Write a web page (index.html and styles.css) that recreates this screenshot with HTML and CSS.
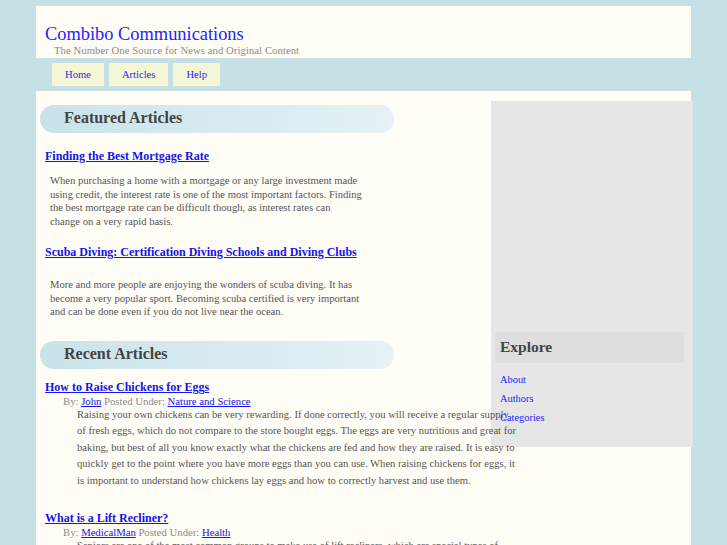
FILE: index.html
```html
<!DOCTYPE html>
<html>
<head>
<meta charset="utf-8">
<title>Combibo Communications</title>
<link rel="stylesheet" href="styles.css">
</head>
<body>
<div class="page">
  <div class="header">
    <h1 class="site-title">Combibo Communications</h1>
    <div class="tagline">The Number One Source for News and Original Content</div>
  </div>
  <div class="nav">
    <a class="nav-btn" href="#">Home</a>
    <a class="nav-btn" href="#">Articles</a>
    <a class="nav-btn" href="#">Help</a>
  </div>
  <div class="content">
    <div class="sidebar">
      <div class="explore">Explore</div>
      <ul class="side-links">
        <li><a href="#">About</a></li>
        <li><a href="#">Authors</a></li>
        <li><a href="#">Categories</a></li>
      </ul>
    </div>
    <div class="main">
      <h2 class="pill">Featured Articles</h2>
      <h3 class="art-title first"><a href="#">Finding the Best Mortgage Rate</a></h3>
      <p class="feat-body">When purchasing a home with a mortgage or any large investment made using credit, the interest rate is one of the most important factors. Finding the best mortgage rate can be difficult though, as interest rates can change on a very rapid basis.</p>
      <h3 class="art-title"><a href="#">Scuba Diving: Certification Diving Schools and Diving Clubs</a></h3>
      <p class="feat-body second">More and more people are enjoying the wonders of scuba diving. It has become a very popular sport. Becoming scuba certified is very important and can be done even if you do not live near the ocean.</p>
      <h2 class="pill recent">Recent Articles</h2>
      <h3 class="art-title rec"><a href="#">How to Raise Chickens for Eggs</a></h3>
      <div class="meta">By: <a href="#">John</a> Posted Under: <a href="#">Nature and Science</a></div>
      <p class="rec-body">Raising your own chickens can be very rewarding. If done correctly, you will receive a regular supply of fresh eggs, which do not compare to the store bought eggs. The eggs are very nutritious and great for baking, but best of all you know exactly what the chickens are fed and how they are raised. It is easy to quickly get to the point where you have more eggs than you can use. When raising chickens for eggs, it is important to understand how chickens lay eggs and how to correctly harvest and use them.</p>
      <h3 class="art-title rec2"><a href="#">What is a Lift Recliner?</a></h3>
      <div class="meta">By: <a href="#">MedicalMan</a> Posted Under: <a href="#">Health</a></div>
      <p class="rec-body">Seniors are one of the most common groups to make use of lift recliners, which are special types of chairs that help a person stand up from a seated position without needing assistance from anyone else.</p>
    </div>
  </div>
</div>
</body>
</html>
```
FILE: styles.css
```css
html, body {
  margin: 0;
  padding: 0;
}
body {
  background: #c5e1e6;
  font-family: "Liberation Serif", "Times New Roman", serif;
  color: #555;
  overflow: hidden;
  height: 545px;
}
.page {
  margin: 6px 0 0 36px;
  width: 655px;
  background: #fffdf6;
  min-height: 600px;
}
.header {
  height: 52px;
  padding-left: 9px;
  box-sizing: border-box;
  padding-top: 17px;
}
.site-title {
  margin: 0;
  font-size: 18.4px;
  font-weight: normal;
  color: #2424ff;
  line-height: 22px;
}
.tagline {
  margin-left: 9px;
  font-size: 10.6px;
  color: #8a8a8a;
  line-height: 12px;
  letter-spacing: 0.1px;
}
.nav {
  height: 33px;
  width: 656px;
  background: #c5e1e6;
  display: flex;
  align-items: center;
  gap: 5px;
  padding-left: 16px;
  box-sizing: border-box;
  border-bottom: 1px solid #cfe3e6;
}
.nav-btn {
  display: block;
  height: 23px;
  line-height: 23px;
  padding: 0 13px;
  background: #f5f5d8;
  color: #2a2aee;
  font-size: 10.6px;
  text-decoration: none;
}
.content {
  display: grid;
  grid-template-columns: 455px 202px;
  padding-top: 10px;
}
.sidebar {
  grid-column: 2;
  grid-row: 1;
  background: #e6e6e6;
  height: 346px;
  padding-top: 231px;
  box-sizing: border-box;
}
.explore {
  margin-left: 4px;
  width: 189px;
  height: 31px;
  line-height: 30px;
  background: #dedede;
  color: #444;
  font-weight: bold;
  font-size: 15.5px;
  padding-left: 5px;
  box-sizing: border-box;
}
.side-links {
  list-style: none;
  margin: 0;
  padding: 7px 0 0 9px;
}
.side-links li {
  font-size: 10.4px;
  line-height: 19px;
}
.side-links a {
  color: #2424ff;
  text-decoration: none;
}
.main {
  grid-column: 1;
  grid-row: 1;
  padding: 4px 0 0 4px;
}
.pill {
  margin: 0;
  width: 354px;
  height: 28px;
  line-height: 25px;
  border-radius: 14px;
  background: linear-gradient(to right, #c8e3ea, #e6f2f5);
  font-size: 16px;
  font-weight: bold;
  color: #444;
  padding-left: 24px;
  box-sizing: border-box;
}
.art-title {
  margin: 0 0 0 5px;
  font-size: 12px;
  line-height: 15px;
  font-weight: bold;
}
.art-title a {
  color: #1414ee;
}
.art-title.first {
  margin-top: 16px;
}
.feat-body {
  margin: 10px 0 0 10px;
  width: 312px;
  font-size: 10.6px;
  line-height: 13.5px;
  color: #555;
}
.feat-body + .art-title {
  margin-top: 17px;
}
.feat-body.second {
  margin-top: 18px;
}
.pill.recent {
  margin-top: 22px;
}
.art-title.rec {
  margin-top: 11px;
}
.meta {
  margin-left: 23px;
  font-size: 10.7px;
  line-height: 13px;
  color: #8a8a8a;
}
.meta a {
  color: #1414ee;
}
.rec-body {
  margin: -1px 0 0 37px;
  width: 442px;
  font-size: 10.6px;
  line-height: 16.5px;
  color: #555;
}
.art-title.rec2 {
  margin-top: 22px;
}
```
